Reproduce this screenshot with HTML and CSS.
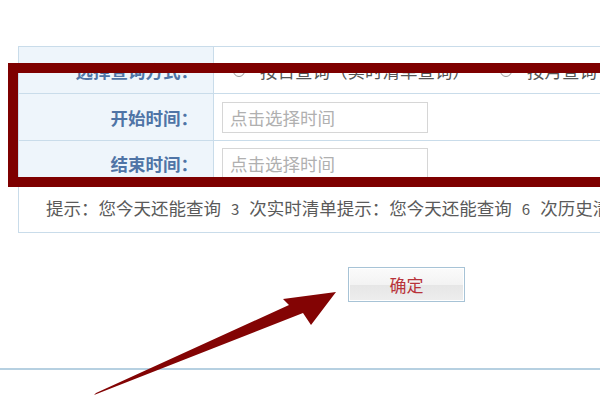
FILE: index.html
```html
<!DOCTYPE html>
<html lang="zh-CN">
<head>
<meta charset="utf-8">
<title>查询</title>
<link rel="stylesheet" href="styles.css">
</head>
<body>
<div class="page">
  <table class="form">
    <tr class="r1">
      <th>选择查询方式：</th>
      <td class="radios">
        <span class="opt"><span class="radio"></span>按日查询（实时清单查询）</span>
        <span class="opt"><span class="radio"></span>按月查询（历史清单查询）</span>
      </td>
    </tr>
    <tr class="r2">
      <th>开始时间：</th>
      <td><input class="time" type="text" placeholder="点击选择时间"></td>
    </tr>
    <tr class="r3">
      <th>结束时间：</th>
      <td><input class="time" type="text" placeholder="点击选择时间"></td>
    </tr>
    <tr class="r4">
      <td class="tips" colspan="2">提示：您今天还能查询<span class="num">3</span>次实时清单提示：您今天还能查询<span class="num">6</span>次历史清单</td>
    </tr>
  </table>
  <div class="actions">
    <button class="ok" type="button">确定</button>
  </div>
  <div class="rule"></div>
  <svg class="overlay" width="600" height="401" viewBox="0 0 600 401" xmlns="http://www.w3.org/2000/svg">
    <rect x="13" y="68" width="700" height="114" fill="none" stroke="#7e0000" stroke-width="10"/>
    <polygon fill="#830404" points="94,395 96,393 289,305 283,299 336,292 311,325 303,313"/>
  </svg>
</div>
</body>
</html>
```
FILE: styles.css
```css
html, body {
  margin: 0;
  padding: 0;
  background: #ffffff;
}

.page {
  position: relative;
  width: 600px;
  height: 401px;
  overflow: hidden;
  padding: 46px 0 0 18px;
  box-sizing: border-box;
  font-family: "Noto Sans CJK SC", "Noto Sans", sans-serif;
  font-size: 17.5px;
}

.form {
  width: 720px;
  border-collapse: collapse;
  table-layout: fixed;
}

.form th,
.form td {
  border: 1px solid #c9dcea;
  padding: 0;
}

.form th {
  width: 179px;
  padding-right: 15px;
  text-align: right;
  background: #eef5fb;
  color: #4f74a6;
  font-weight: bold;
  white-space: nowrap;
}

.r1 { height: 47px; }
.r2 { height: 47px; }
.r3 { height: 46px; }
.r4 { height: 46px; }

.radios {
  color: #555555;
  white-space: nowrap;
  padding-left: 19px !important;
}

.opt {
  display: inline-flex;
  align-items: center;
  margin-right: 26px;
}

.radio {
  display: inline-block;
  width: 10px;
  height: 10px;
  border: 1px solid #9a9a9a;
  border-radius: 50%;
  margin-right: 15px;
  background: #fbfbfb;
}

.time {
  display: block;
  margin-left: 8px;
  width: 206px;
  height: 31px;
  box-sizing: border-box;
  border: 1px solid #d6d6d6;
  padding: 0 0 0 7px;
  font-family: "Noto Sans CJK SC", "Noto Sans", sans-serif;
  font-size: 17.5px;
  color: #333333;
  outline: none;
}

.time::placeholder {
  color: #b0b0b0;
}

.tips {
  color: #5a5a5a;
  padding: 0 0 4px 27px !important;
  white-space: nowrap;
}

.num {
  display: inline-block;
  padding: 0 10px;
  font-size: 15px;
}

.actions {
  margin-top: 34px;
  padding-left: 330px;
}

.ok {
  display: block;
  width: 117px;
  height: 35px;
  border: 1px solid #a7c3d6;
  box-shadow: inset 0 0 0 1px #ffffff;
  background: linear-gradient(#fbfbfb 0%, #f3f3f3 50%, #e6e6e6 51%, #eeeeee 100%);
  color: #b8333a;
  font-family: "Noto Sans CJK SC", "Noto Sans", sans-serif;
  font-size: 17px;
  padding: 0;
}

.rule {
  margin-top: 66px;
  margin-left: -18px;
  width: 600px;
  height: 2px;
  background: #b6d0e1;
}

.overlay {
  position: absolute;
  left: 0;
  top: 0;
  pointer-events: none;
}
```
